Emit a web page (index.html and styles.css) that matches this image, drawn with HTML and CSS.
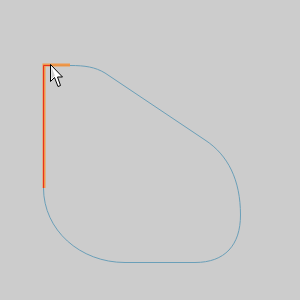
FILE: index.html
```html
<!DOCTYPE html>
<html>
<head>
<meta charset="utf-8">
<link rel="stylesheet" href="styles.css">
</head>
<body>
<div class="canvas">
<svg class="drawing" width="300" height="300" viewBox="0 0 300 300">
  <path class="shape" d="M43.5,188 L43.5,65.5 L70,65.5 C85,65.5 95,67 105,73 L205,140 C228,155 240.5,180 240.5,215 C240.5,245 225,262.5 195,262.5 L125,262.5 C80,262.5 43.5,230 43.5,188 Z"/>
  <path class="hl" d="M44,188 L44,65 L70,65"/>
  <path class="sel" d="M43.5,188 L43.5,65.5 L50,65.5"/>
  <path class="cursor" d="M50.5,64.5 L50.5,81.5 L54.5,77.5 L58,86.5 L60.5,85.5 L57.5,77 L62.5,77 Z"/>
  <path class="cursor-shade" d="M51.5,67 L51.5,79 L54.8,75.8 L55.5,77.5 Z"/>
</svg>
</div>
</body>
</html>
```
FILE: styles.css
```css
html, body {
  margin: 0;
  padding: 0;
  background: #cccccc;
}
.canvas {
  width: 300px;
  height: 300px;
}
.drawing {
  display: block;
}
.shape {
  fill: none;
  stroke: #6a9fb8;
  stroke-width: 1;
}
.hl {
  fill: none;
  stroke: #f5913a;
  stroke-width: 3;
  stroke-opacity: 0.9;
}
.sel {
  fill: none;
  stroke: #e8321e;
  stroke-width: 1;
}
.cursor {
  fill: #ffffff;
  stroke: #000000;
  stroke-width: 1;
  stroke-linejoin: miter;
}
.cursor-shade {
  fill: #9a9a9a;
  opacity: 0.5;
}
```
